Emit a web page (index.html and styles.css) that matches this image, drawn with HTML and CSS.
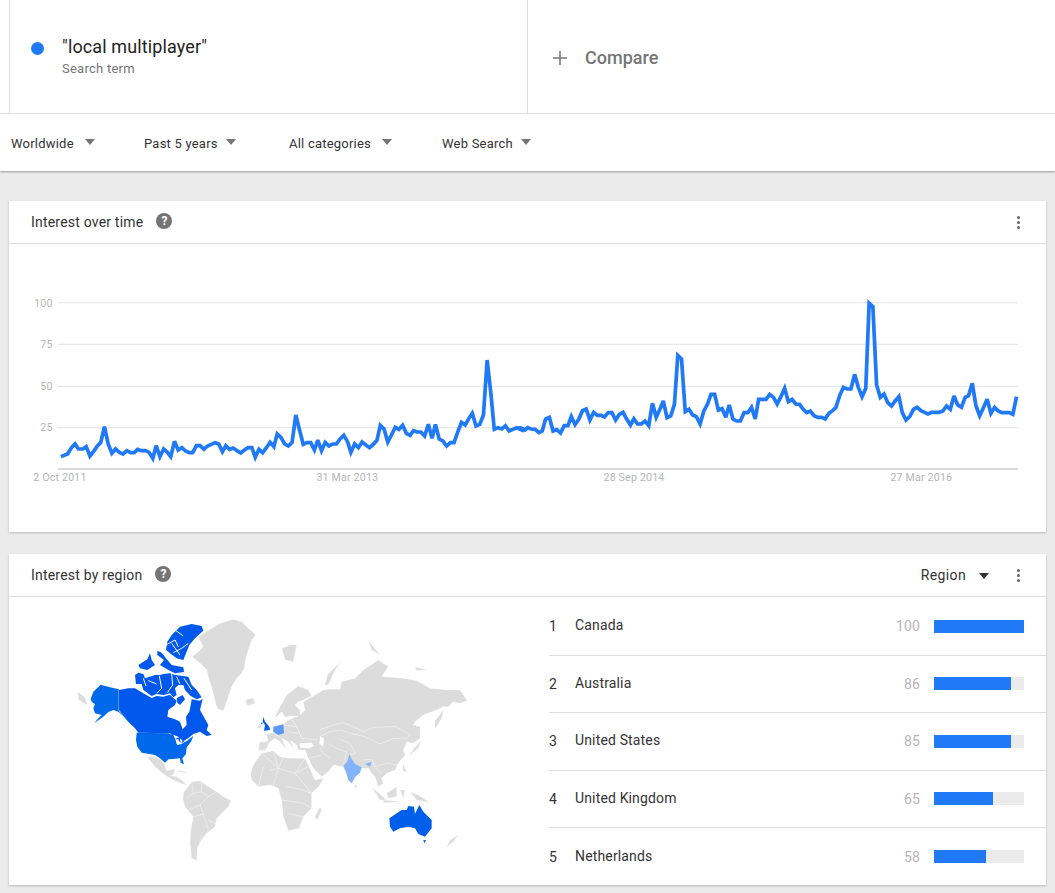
FILE: index.html
```html
<!DOCTYPE html>
<html lang="en">
<head>
<meta charset="utf-8">
<title>Google Trends</title>
<link rel="stylesheet" href="styles.css">
</head>
<body>
<header class="top">
  <div class="terms">
    <div class="term">
      <span class="term-dot"></span>
      <div class="term-text">
        <div class="term-name">"local multiplayer"</div>
        <div class="term-sub">Search term</div>
      </div>
    </div>
    <div class="compare">
      <svg class="plus" viewBox="0 0 15 15"><path d="M7.5 0v15M0 7.5h15"/></svg>
      <span>Compare</span>
    </div>
  </div>
  <nav class="filters">
    <div class="filter"><span>Worldwide</span><i class="caret"></i></div>
    <div class="filter tight"><span>Past 5 years</span><i class="caret"></i></div>
    <div class="filter"><span>All categories</span><i class="caret"></i></div>
    <div class="filter tight"><span>Web Search</span><i class="caret"></i></div>
  </nav>
</header>

<main class="content">
  <section class="card">
    <div class="card-head">
      <span class="card-title">Interest over time</span>
      <span class="help">?</span>
      <span class="spacer"></span>
      <span class="more"><i></i><i></i><i></i></span>
    </div>
    <svg class="chart" viewBox="27 -108 3111 864">
      <g class="grid">
        <path d="M174 68H3054M174 193H3054M174 319H3054M174 443H3054"/>
      </g>
      <path class="baseline" d="M174 567H3054"/>
      <g class="axis">
        <text x="158" y="80" text-anchor="end">100</text>
        <text x="158" y="204" text-anchor="end">75</text>
        <text x="158" y="330" text-anchor="end">50</text>
        <text x="158" y="454" text-anchor="end">25</text>
        <text x="180" y="603" text-anchor="middle">2 Oct 2011</text>
        <text x="1042" y="603" text-anchor="middle">31 Mar 2013</text>
        <text x="1902" y="603" text-anchor="middle">28 Sep 2014</text>
        <text x="2764" y="603" text-anchor="middle">27 Mar 2016</text>
      </g>
      <polyline class="trend" transform="scale(1.0142 1)" points="180,530 200,522 212,502 222,492 232,507 245,507 255,500 266,528 277,514 288,498 298,488 309,440 320,492 331,520 342,507 353,517 364,522 375,512 386,518 397,518 407,508 418,512 430,512 441,517 452,535 462,497 473,530 484,507 495,517 505,530 516,484 527,510 538,503 549,513 560,518 570,518 581,497 592,497 603,508 614,498 625,493 636,488 647,492 658,515 668,497 679,508 690,504 701,512 712,519 723,510 734,503 745,503 755,532 766,508 777,518 788,503 799,487 810,500 820,462 831,472 842,492 853,498 864,487 875,405 886,450 897,493 908,488 919,488 930,510 940,480 951,512 962,487 973,498 984,492 995,492 1006,477 1017,466 1028,485 1038,517 1049,492 1060,503 1071,486 1082,495 1093,503 1104,493 1115,481 1125,436 1136,447 1147,486 1158,465 1169,442 1180,448 1191,436 1202,460 1213,466 1223,452 1234,456 1245,456 1256,468 1267,433 1278,475 1288,433 1299,477 1310,483 1321,498 1332,488 1343,488 1354,456 1365,427 1376,435 1387,415 1397,400 1408,438 1419,433 1430,405 1441,240 1452,340 1462,448 1473,443 1484,447 1495,437 1506,453 1517,448 1528,443 1539,448 1550,453"/>
      <polyline class="trend" transform="translate(1575 0) scale(1.0142 1)" points="-21,445 -14,443 0,450 8,443 18,447 30,448 41,458 51,453 61,417 72,412 83,453 94,449 105,459 116,437 127,437 137,410 148,434 159,418 170,392 181,387 192,420 203,397 214,406 225,406 235,411 246,398 257,398 268,420 279,403 290,397 301,418 312,435 322,416 333,432 344,432 355,423 366,437 377,370 388,412 399,388 409,363 420,413 431,408 442,373 452,226 463,237 474,395 485,388 496,405 507,410 518,432 529,393 540,372 550,343 561,343 572,390 583,386 594,412 604,375 615,417 626,423 637,423 648,398 659,398 670,382 681,417 691,358 702,358 713,358 724,343 735,352 746,372 757,350 768,325 779,365 790,358 801,372 812,373 823,388 833,398 844,393 855,407 866,412 877,412 888,417 899,400 910,392 920,382 931,346 942,322 953,327 964,327 975,283 986,322 997,350 1008,325 1018,70 1029,80 1040,315 1051,352 1062,342 1073,368 1084,378 1095,363 1106,350 1116,398 1127,420 1138,410 1149,388 1160,382 1171,392 1182,397 1192,402 1203,397 1214,397 1225,397 1236,393 1247,378 1258,388 1269,348 1280,375 1291,382 1302,352 1312,347 1323,310 1334,378 1345,407 1356,383 1367,358 1378,400 1389,382 1400,393 1410,398 1421,398 1432,398 1443,403 1454,350"/>
    </svg>
  </section>

  <section class="card">
    <div class="card-head">
      <span class="card-title">Interest by region</span>
      <span class="help">?</span>
      <span class="spacer"></span>
      <span class="region-select">Region</span>
      <i class="caret dark"></i>
      <span class="more"><i></i><i></i><i></i></span>
    </div>
    <div class="region-body">
      <div class="map-pane">
        <svg class="map" viewBox="0 0 1260 810">
          <g class="land">
            <path d="M52 245L62 252L75 262L82 285L68 278L56 270Z"/>
            <path d="M430 70L455 55L480 40L520 28L545 35L555 45L587 75L575 90L570 105L556 150L553 175L545 190L530 205L515 230L505 260L490 302L475 298L468 285L460 250L455 232L445 200L440 178L420 160L397 140L415 125L430 110L415 80Z"/>
            <path d="M555 272L580 265L585 280L565 288Z"/>
            <path d="M262 442L275 438L298 446L312 462L320 482L345 476L340 495L332 497L350 500L365 510L380 525L368 522L340 510L310 492L285 470Z"/>
            <path d="M345 482L365 482L388 490L365 487Z"/>
            <path d="M368 565L372 545L395 515L420 512L445 530L470 545L490 560L513 572L505 590L490 605L470 625L465 650L440 670L425 690L412 715L410 752L395 745L390 700L392 660L400 620L375 590Z"/>
          </g>
          <g class="borders">
            <path d="M395 515L400 550L380 565M425 515L425 545L400 550M470 545L445 560L425 545M385 600L420 585L430 612L400 620M430 612L445 660L425 690M420 585L445 560M412 715L425 680M445 630L465 640"/>
          </g>
          <g class="ca">
            <path d="M177 240L205 235L225 235L250 250L275 264L290 258L310 260L330 254L340 264L350 272L345 285L325 300L322 320L345 328L360 335L368 358L380 345L378 320L388 305L392 285L395 268L420 272L428 266L420 300L445 345L440 360L455 375L440 378L420 365L400 372L385 385L365 400L345 385L330 370L235 368L225 355L205 335L185 310L177 300Z"/>
            <path d="M335 75L360 50L395 42L425 48L430 62L405 85L388 105L378 130L370 150L350 145L330 130L318 120L322 95Z"/>
            <path d="M235 165L262 148L270 130L275 150L285 165L262 180L240 175Z"/>
            <path d="M292 122L305 128L318 145L335 165L370 172L372 186L345 190L325 180L300 165L312 150L292 135Z"/>
            <path d="M225 195L235 188L250 192L255 205L285 195L300 195L310 192L330 190L345 195L385 200L395 225L410 240L425 262L410 268L392 258L375 240L370 225L355 225L345 235L350 255L340 262L330 250L310 255L290 252L275 258L250 240L245 222L228 222Z"/>
            <path d="M350 265L368 255L375 268L360 285L352 278Z"/>
          </g>
          <g class="channels">
            <path d="M318 105L345 90L355 110M340 128L365 115L385 100M345 60L370 78M335 100L360 135M250 205L258 228M298 198L305 235L290 250M335 192L338 225L322 248M265 212L290 222M350 200L360 222M372 205L395 240"/>
          </g>
          <g class="us">
            <path d="M92 268L100 245L122 224L150 232L176 238L176 302L196 320L214 345L190 318L176 306L160 300L145 306L128 322L102 340L118 322L125 315L105 310L100 295L105 283L95 275Z"/>
            <path d="M230 368L325 370L342 378L345 385L352 405L365 402L375 395L395 382L412 368L400 378L393 395L380 412L378 432L367 445L372 463L362 458L360 445L340 447L325 448L315 458L300 445L285 435L268 432L245 428L232 410L228 390Z"/>
          </g>
          <g class="water">
            <path d="M340 374L358 382L345 386Z"/>
            <path d="M350 386L356 388L356 404L350 402Z"/>
            <path d="M360 385L368 392L362 402Z"/>
            <path d="M370 394L392 380L380 394Z"/>
          </g>
          <g transform="translate(540 0)">
            <g class="land">
              <path d="M32 490L40 465L65 430L100 422L120 440L150 445L195 445L205 465L225 510L250 505L240 525L215 550L215 595L190 620L178 655L145 662L130 620L125 570L115 535L90 525L55 530L35 510Z"/>
              <path d="M240 590L245 600L232 630L224 620Z"/>
              <path d="M105 320L120 290L140 255L175 228L205 240L215 258L190 270L175 275L165 285L180 300L180 315L195 300L190 275L225 255L250 240L265 238L300 238L305 215L345 205L370 180L415 150L445 170L425 200L490 205L530 212L570 235L620 240L660 240L682 272L660 280L640 275L625 290L610 290L590 300L550 315L525 335L520 345L540 350L540 385L520 400L500 395L490 420L495 435L475 460L465 480L440 490L425 505L430 520L415 530L405 500L395 490L385 475L365 475L345 505L335 520L318 490L310 470L280 465L270 480L245 500L225 485L205 445L195 420L175 420L170 405L150 390L165 420L145 395L125 385L140 420L120 395L105 385L90 395L75 422L55 420L57 400L85 392L78 372L100 368L100 350L130 343L145 330L175 318L150 318L135 322L125 305L108 322Z"/>
              <path d="M55 345L65 343L62 355L53 355Z"/>
              <path d="M125 115L150 105L170 105L165 130L160 155L135 150Z"/>
              <path d="M255 225L262 195L300 157L280 190L265 225Z"/>
              <path d="M385 90L420 135L395 120Z"/>
              <path d="M525 170L560 180L530 182Z"/>
              <path d="M612 298L605 325L585 358L585 332Z"/>
              <path d="M545 390L535 415L505 438L525 412Z"/>
              <path d="M395 530L440 570L420 570Z"/>
              <path d="M440 550L470 530L470 560L445 565Z"/>
              <path d="M430 570L490 575L430 578Z"/>
              <path d="M480 540L495 540L490 565Z"/>
              <path d="M510 545L535 555L570 578L530 570Z"/>
              <path d="M655 675L640 695L620 712L630 690Z"/>
              <path d="M490 460L500 490L488 480Z"/>
              <path d="M345 522L352 530L345 535Z"/>
              <path d="M60 395L85 398L80 415L60 420Z"/>
              <path d="M20 268L40 265L38 280L18 285Z"/>
            </g>
            <g class="water">
              <path d="M178 400L215 398L222 408L208 415L182 414Z"/>
              <path d="M240 380L252 385L250 410L238 402Z"/>
              <path d="M215 470L250 505L225 490Z"/>
            </g>
            <g class="borders">
              <path d="M65 430L115 475L100 422M115 475L130 442M115 475L100 527M115 475L165 490L195 445M165 490L205 470M165 490L215 550M140 530L190 540L215 550M125 570L190 580L215 595M145 610L190 620M70 470L55 530M90 480L115 475"/>
              <path d="M238 360L280 345L310 338L340 350L370 365L400 352L470 350L510 375L500 385L460 385L420 402L370 378L340 372L300 360L270 365L240 380M300 388L330 400L345 430L330 435M262 400L300 420L320 425L310 462M240 420L270 445M205 445L245 435M365 450L395 448L405 470L425 492M405 470L440 460L475 465M150 320L170 350L185 385M130 345L170 350M185 385L230 390M145 365L175 370M100 368L125 385"/>
            </g>
            <path class="in" d="M328 432L335 448L345 462L365 472L360 488L345 500L335 520L325 510L318 485L310 468L322 455Z"/>
            <path class="in" d="M375 462L395 455L390 470L380 465Z"/>
            <path class="de" d="M100 350L130 343L132 370L115 375L100 365Z"/>
            <path class="uk" d="M70 320L75 335L88 350L90 360L72 362L75 345L68 335Z"/>
            <path class="uk" d="M62 338L68 338L66 344Z"/>
            <path class="au" d="M448 625L470 610L485 600L500 600L505 588L522 590L525 612L538 585L550 605L575 630L575 655L555 680L535 672L525 655L505 650L480 655L460 665L450 650Z"/>
            <path class="au" d="M550 690L558 690L553 700Z"/>
          </g>
        </svg>
      </div>
      <ol class="ranks">
        <li class="rank"><span class="rank-no">1</span><span class="rank-name">Canada</span><span class="rank-val">100</span><span class="track"><span class="fill" style="width:100%"></span></span></li>
        <li class="rank"><span class="rank-no">2</span><span class="rank-name">Australia</span><span class="rank-val">86</span><span class="track"><span class="fill" style="width:86%"></span></span></li>
        <li class="rank"><span class="rank-no">3</span><span class="rank-name">United States</span><span class="rank-val">85</span><span class="track"><span class="fill" style="width:85%"></span></span></li>
        <li class="rank"><span class="rank-no">4</span><span class="rank-name">United Kingdom</span><span class="rank-val">65</span><span class="track"><span class="fill" style="width:65%"></span></span></li>
        <li class="rank"><span class="rank-no">5</span><span class="rank-name">Netherlands</span><span class="rank-val">58</span><span class="track"><span class="fill" style="width:58%"></span></span></li>
      </ol>
    </div>
  </section>
</main>
</body>
</html>
```

FILE: styles.css
```css
* { box-sizing: border-box; }
html, body { margin: 0; height: 893px; overflow: hidden; }
body { background: #ebebeb; font-family: Roboto, "Liberation Sans", sans-serif; color: #333; }

.top { background: #fff; height: 171px; box-shadow: 0 1px 2px rgba(0,0,0,.35); }
.terms { display: flex; height: 114px; padding-left: 9px; border-bottom: 1px solid #ddd; }
.term { width: 519px; display: flex; align-items: flex-start; border-left: 1px solid #ddd; border-right: 1px solid #ddd; padding: 35px 0 0 21px; }
.term-dot { width: 13px; height: 13px; border-radius: 50%; background: #2079f6; margin: 7px 18px 0 0; flex: none; }
.term-name { font-size: 18px; line-height: 24px; color: #222; letter-spacing: .12px; }
.term-sub { font-size: 13px; line-height: 18px; color: #757575; margin-top: 1px; letter-spacing: .25px; }
.compare { display: flex; align-items: center; padding: 2px 0 0 25px; color: #757575; font-size: 18px; font-weight: 500; height: 113px; }
.plus { width: 14px; height: 14px; margin-right: 18px; }
.plus path { stroke: #757575; stroke-width: 1.6; fill: none; }

.filters { display: grid; grid-template-columns: 133px 145px 153px auto; align-items: center; height: 57px; padding: 2px 0 0 11px; font-size: 13px; color: #333; letter-spacing: .22px; }
.filter { display: flex; align-items: center; gap: 11px; }
.filter.tight { gap: 8px; }
.caret { display: block; width: 0; height: 0; border-left: 5px solid transparent; border-right: 5px solid transparent; border-top: 6px solid #757575; margin-top: -3px; }
.caret.dark { border-top-color: #333; margin: 1px 4px 0 13px; }

.content { padding: 30px 9px 0; display: flex; flex-direction: column; gap: 22px; }
.card { background: #fff; height: 331px; box-shadow: 0 1px 2px rgba(0,0,0,.22); }
.card-head { display: flex; align-items: center; height: 43px; padding: 0 26px 0 22px; border-bottom: 1px solid #ddd; font-size: 14px; letter-spacing: .2px; }
.card-title { color: #333; }
.help { width: 16px; height: 16px; border-radius: 50%; background: #757575; color: #fff; font-size: 12px; font-weight: 700; line-height: 16px; text-align: center; margin-left: 13px; margin-top: -2px; letter-spacing: 0; }
.spacer { flex: 1; }
.more { display: flex; flex-direction: column; gap: 2px; margin-left: 24px; }
.more i { display: block; width: 3px; height: 3px; border-radius: 50%; background: #666; }
.region-select { color: #333; letter-spacing: .35px; }

.chart { display: block; width: 1037px; height: 288px; }
.grid path { stroke: #e8e8e8; stroke-width: 4; fill: none; }
.baseline { stroke: #ccc; stroke-width: 4; fill: none; }
.axis text { font-family: Roboto, "Liberation Sans", sans-serif; font-size: 32px; letter-spacing: .5px; fill: #b5b5b5; }
.trend { fill: none; stroke: #2079f6; stroke-width: 11; stroke-linejoin: miter; stroke-miterlimit: 3; }

.region-body { display: flex; height: 288px; }
.map-pane { width: 540px; flex: none; padding: 13px 0 0 51px; }
.map { display: block; width: 420px; height: 270px; }
.land path { fill: #dcdcdc; stroke: #fff; stroke-width: .8; }
.borders path { fill: none; stroke: #f7f7f7; stroke-width: 1.8; }
.channels path { fill: none; stroke: #fff; stroke-width: 3; }
.water path { fill: #fff; }
.ca path { fill: #0058ec; }
.us path { fill: #0069eb; }
.uk { fill: #0060ec; }
.de { fill: #5c98f6; }
.in { fill: #83b3f8; }
.au { fill: #005fea; }

.ranks { list-style: none; margin: 0; padding: 1px 0 0; flex: 1; }
.rank { display: flex; align-items: center; height: 57.5px; border-bottom: 1px solid #ddd; font-size: 14px; color: #333; padding-right: 22px; letter-spacing: .15px; }
.rank:last-child { border-bottom: 0; }
.rank-no { width: 26px; }
.rank-name { flex: 1; margin-top: -2px; }
.rank-val { color: #b5b5b5; margin-right: 14px; }
.track { display: block; width: 90px; height: 13px; background: #ebebeb; }
.fill { display: block; height: 100%; background: #2079f6; }
```
